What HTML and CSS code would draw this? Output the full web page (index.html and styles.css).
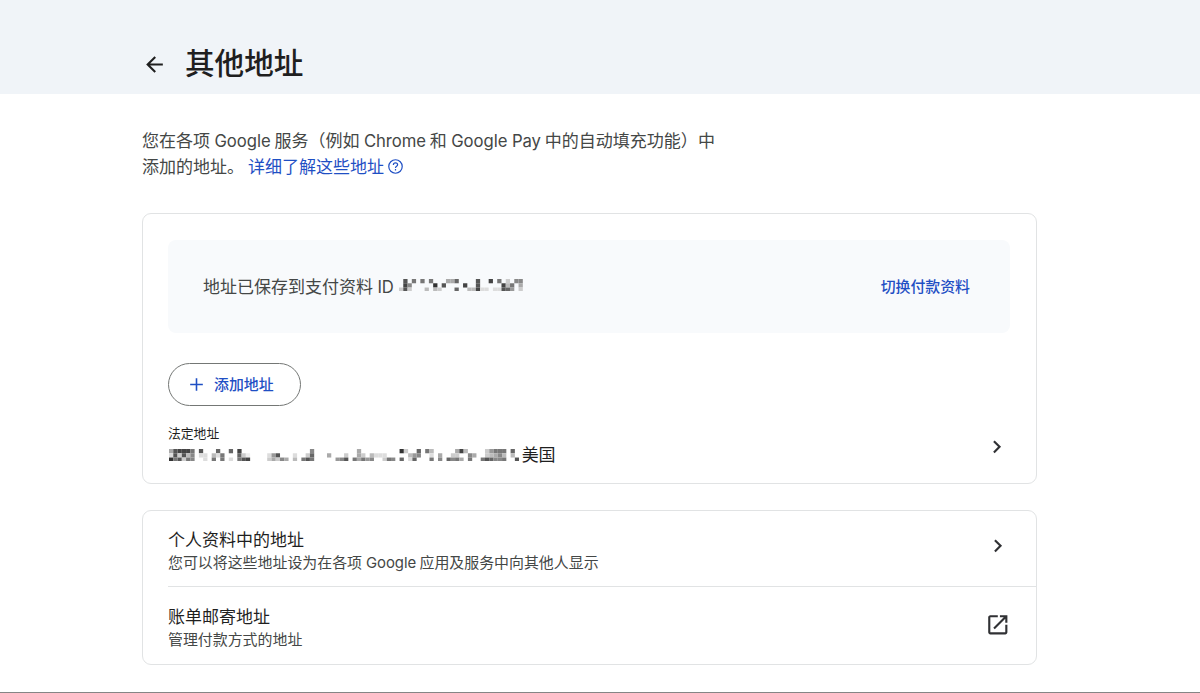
FILE: index.html
```
<!DOCTYPE html>
<html lang="zh-CN">
<head>
    <meta charset="UTF-8">
    <meta name="viewport" content="width=device-width, initial-scale=1.0">
    <title>其他地址</title>
    <link rel="stylesheet" href="styles.css">
</head>
<body>
    <header class="page-header">
        <svg class="back-icon" viewBox="0 0 24 24"><path d="M20 11H7.83l5.59-5.59L12 4l-8 8 8 8 1.41-1.41L7.83 13H20v-2z"/></svg>
        <h1>其他地址</h1>
    </header>

    <main class="content">
        <p class="intro">您在各项 <span class="latin">Google</span> 服务（例如 <span class="latin">Chrome</span> 和 <span class="latin">Google Pay</span> 中的自动填充功能）中<br>添加的地址。 <a class="learn-more" href="#">详细了解这些地址<svg class="help-icon" viewBox="0 0 24 24"><circle cx="12" cy="12" r="9.500"/><path d="M9 9.800c0-1.700 1.300-2.900 3-2.900s3 1.100 3 2.700c0 2-3 2.200-3 4.400M12 15.700v1.900"/></svg></a></p>

        <!-- Saved addresses -->
        <section class="card saved">
            <div class="profile-box">
                <span class="profile-text">地址已保存到支付资料 <span class="latin">ID</span></span>
                <svg class="mask" id="profileMask"></svg>
                <a class="switch-link" href="#">切换付款资料</a>
            </div>
            <button class="add-button">
                <svg class="add-icon" viewBox="0 0 24 24"><path d="M20 13h-7v7h-2v-7H4v-2h7V4h2v7h7v2z"/></svg>
                <span>添加地址</span>
            </button>
            <div class="legal-row">
                <div>
                    <div class="legal-label">法定地址</div>
                    <div class="legal-value"><svg class="mask" id="addressMask"></svg><span>美国</span></div>
                </div>
                <svg class="row-icon" viewBox="0 0 24 24"><path d="M8.590 16.590L13.170 12 8.590 7.410 10 6l6 6-6 6-1.410-1.410z"/></svg>
            </div>
        </section>

        <!-- Other address sources -->
        <section class="card links">
            <div class="link-row">
                <div class="row-text">
                    <div class="row-title">个人资料中的地址</div>
                    <div class="row-desc">您可以将这些地址设为在各项 <span class="latin">Google</span> 应用及服务中向其他人显示</div>
                </div>
                <svg class="row-icon" viewBox="0 0 24 24"><path d="M8.590 16.590L13.170 12 8.590 7.410 10 6l6 6-6 6-1.410-1.410z"/></svg>
            </div>
            <div class="link-row">
                <div class="row-text">
                    <div class="row-title">账单邮寄地址</div>
                    <div class="row-desc">管理付款方式的地址</div>
                </div>
                <svg class="row-icon" viewBox="0 0 24 24"><path d="M19 19H5V5h7V3H5c-1.110 0-2 .900-2 2v14c0 1.100.890 2 2 2h14c1.100 0 2-.900 2-2v-7h-2v7zM14 3v2h3.590l-9.830 9.830 1.410 1.410L19 6.410V10h2V3h-7z"/></svg>
            </div>
        </section>
    </main>

    <script src="mask.js"></script>
</body>
</html>
```
FILE: styles.css
```
* {
    box-sizing: border-box;
}
body {
    margin: 0;
    height: 693px;
    border-bottom: 1px solid #858585;
    background: #fff;
    color: #1f1f1f;
    font-family: "Noto Sans CJK SC", sans-serif;
    overflow: hidden;
}
.latin {
    margin-left: 0.6px;
    font-family: Inter, "Noto Sans CJK SC", sans-serif;
    font-size: 0.98em;
    letter-spacing: -0.003em;
    line-height: 1;
}
svg {
    fill: currentColor;
    flex-shrink: 0;
}
a {
    color: #1f4fc4;
    text-decoration: none;
}

/* Header */
.page-header {
    display: flex;
    align-items: center;
    height: 94px;
    padding: 34px 0 0 142px;
    background: #f0f4f8;
}
.back-icon {
    width: 25px;
    height: 25px;
    margin-right: 18px;
}
h1 {
    margin: 0;
    padding-bottom: 5px;
    font-size: 29.6px;
    font-weight: 500;
    line-height: 40px;
}

.content {
    width: 895px;
    margin-left: 142px;
    padding-top: 33px;
}
.intro {
    height: 52px;
    margin: 0;
    font-size: 17.03px;
    line-height: 25.6px;
    color: #444746;
}
.help-icon {
    width: 17px;
    height: 17px;
    margin-left: 2.5px;
    vertical-align: -2px;
    fill: none;
    stroke: currentColor;
    stroke-width: 1.7;
}

/* Cards */
.card {
    border: 1px solid #e1e3e4;
    border-radius: 9px;
}
.saved {
    height: 271px;
    margin-top: 34px;
    padding: 26px 26px 0 25px;
}
.profile-box {
    display: flex;
    align-items: center;
    height: 93px;
    padding: 0 40px 2px 35px;
    border-radius: 8px;
    background: #f8fafc;
    color: #444746;
    font-size: 17px;
}
.profile-text {
    white-space: nowrap;
}
.profile-box .mask {
    margin: 0 0 1px 5.5px;
}
.switch-link {
    margin-left: auto;
    font-size: 14.9px;
    font-weight: 500;
}
.add-button {
    display: flex;
    align-items: center;
    width: 133px;
    height: 43px;
    margin-top: 30px;
    padding: 0 0 0 18px;
    border: 1px solid #747775;
    border-radius: 22px;
    background: #fff;
    color: #1f4fc4;
    font: 500 14.9px "Noto Sans CJK SC", sans-serif;
}
.add-button span {
    padding-bottom: 2px;
}
.add-icon {
    width: 19px;
    height: 19px;
    margin-right: 8px;
}
.legal-row,
.link-row {
    display: flex;
    align-items: center;
    justify-content: space-between;
}
.legal-row {
    margin-top: 17px;
}
.legal-row .row-icon {
    margin-top: 3px;
}
.legal-label {
    font-size: 12.8px;
    line-height: 19px;
}
.legal-value {
    display: flex;
    align-items: center;
    height: 25px;
    gap: 3px;
    font-size: 17px;
    line-height: 25px;
}
.legal-value .mask {
    margin: 1px 0 0 0.5px;
}
.legal-value span {
    padding-bottom: 2px;
}
.row-icon {
    width: 25.6px;
    height: 25.6px;
    color: #303134;
}
.links {
    height: 155px;
    margin-top: 26px;
    padding-left: 25px;
}
.link-row {
    height: 75px;
    padding-right: 25.5px;
}
.link-row:first-child .row-icon {
    margin-bottom: 5px;
}
.link-row + .link-row {
    height: 78px;
    border-top: 1px solid #e1e3e4;
}
.link-row + .link-row .row-icon {
    margin-bottom: 1px;
}
.row-title {
    font-size: 17px;
    line-height: 25px;
}
.row-desc {
    color: #444746;
    font-size: 14.93px;
    line-height: 21px;
}
.row-desc .latin {
    font-size: 1em;
}
```
FILE: mask.js
```
// Pixelated blocks over private values: one hex digit per cell, 0 = black, dot = empty
const CELL = 4.27;

function drawMask(id, rows) {
    const svg = document.getElementById(id);
    svg.setAttribute('width', CELL * rows[0].length);
    svg.setAttribute('height', CELL * rows.length);
    rows.forEach((row, y) => {
        [...row].forEach((shade, x) => {
            if (shade === '.') return;
            const rect = document.createElementNS('http://www.w3.org/2000/svg', 'rect');
            rect.setAttribute('x', x * CELL);
            rect.setAttribute('y', y * CELL);
            rect.setAttribute('width', CELL);
            rect.setAttribute('height', CELL);
            rect.setAttribute('fill', '#' + shade.repeat(3));
            svg.appendChild(rect);
        });
    });
}

drawMask('profileMask', [
    '.5.7.7.7...aa6....5..4.7.c.88',
    '.48.....3.5....4..5.....4b7.a',
    'c5c...b.bc...6..bb4dd.dd569.c'
]);

drawMask('addressMask', [
    'a54447.5...6..6.4................8..........a.........3c..6.7b.....a4b....c9777.6.',
    'd5c5b8.dd.bd7...6ce....d95...d..c6...a...c..ac.bddd.....b98..d.a..cc..8a..cba8b.b.',
    '375c78..d.7.7.d.754....cac8a.b.757.....985.7a798..c78.6.d6...7.8.687a.7..756887..5'
]);
```
